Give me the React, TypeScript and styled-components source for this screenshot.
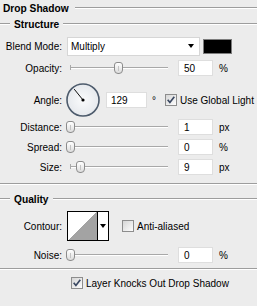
import React from "react";
import styled, { createGlobalStyle } from "styled-components";

const GlobalStyle = createGlobalStyle`
  html, body {
    margin: 0;
    padding: 0;
    background: #ececec;
  }
  body {
    font-family: "Liberation Sans", Arial, sans-serif;
    font-size: 10px;
    color: #000;
  }
`;

const Panel = styled.div`
  width: 257px;
  height: 306px;
  background: #ececec;
  overflow: hidden;
  display: flex;
  flex-direction: column;
`;

const Etched = styled.div<{ $w?: number }>`
  flex: ${({ $w }) => ($w ? `0 0 ${$w}px` : "1")};
  height: 0;
  border-top: 1px solid #9d9d9d;
  border-bottom: 1px solid #ffffff;
`;

const TitleBar = styled.div`
  height: 16px;
  display: flex;
  align-items: center;
  padding-left: 3px;
  gap: 6px;
  font-weight: bold;
  font-size: 10.2px;
`;

const GroupHead = styled.div<{ $mt?: number }>`
  height: 16px;
  margin-top: ${({ $mt }) => $mt ?? 0}px;
  display: flex;
  align-items: center;
  gap: 4px;
  font-weight: bold;
  font-size: 10.2px;
`;

const Separator = styled.div<{ $mt: number }>`
  margin-top: ${({ $mt }) => $mt}px;
  border-top: 1px solid #9d9d9d;
  border-bottom: 1px solid #ffffff;
`;

const Row = styled.div<{ $h: number; $mt?: number; $pl?: number }>`
  height: ${({ $h }) => $h}px;
  margin-top: ${({ $mt }) => $mt ?? 0}px;
  padding-left: ${({ $pl }) => $pl ?? 0}px;
  display: flex;
  align-items: center;
  flex-shrink: 0;
`;

const Label = styled.span`
  width: 62px;
  margin-right: 5px;
  text-align: right;
  flex-shrink: 0;
`;

const Select = styled.div`
  width: 133px;
  height: 19px;
  box-sizing: border-box;
  background: #fff;
  border: 1px solid #d6d6d6;
  display: flex;
  align-items: center;
  justify-content: space-between;
  padding: 0 5px 0 3px;
`;

const Arrow = styled.span`
  width: 0;
  height: 0;
  border-left: 3.5px solid transparent;
  border-right: 3.5px solid transparent;
  border-top: 4px solid #000;
`;

const Swatch = styled.div`
  width: 29px;
  height: 15px;
  margin-left: 3px;
  box-sizing: border-box;
  background: #000;
  border: 1px solid #7d7d7d;
`;

const SliderWrap = styled.div`
  position: relative;
  width: 104px;
  height: 14px;
  flex-shrink: 0;
`;

const Track = styled.div`
  position: absolute;
  left: 3px;
  right: 3px;
  top: 6px;
  border-top: 1px solid #a8a8a8;
  border-bottom: 1px solid #ffffff;
`;

const TrackEnd = styled.div`
  position: absolute;
  left: 3px;
  top: 4px;
  width: 1px;
  height: 5px;
  background: #a8a8a8;
`;

const Thumb = styled.div`
  position: absolute;
  top: 1px;
  width: 9px;
  height: 12px;
  box-sizing: border-box;
  border: 1px solid #8c8c8c;
  border-radius: 3px 3px 4px 4px;
  background: linear-gradient(#ffffff, #dcdcdc);
  &::after {
    content: "";
    position: absolute;
    left: 3px;
    top: 3px;
    width: 1px;
    height: 5px;
    background: #c4c4c4;
  }
`;

const Field = styled.div<{ $w: number; $h: number; $ml: number; $pl?: number }>`
  width: ${({ $w }) => $w}px;
  height: ${({ $h }) => $h}px;
  margin-left: ${({ $ml }) => $ml}px;
  padding-left: ${({ $pl }) => $pl ?? 5}px;
  box-sizing: border-box;
  background: #fff;
  border: 1px solid #dedede;
  display: flex;
  align-items: center;
  flex-shrink: 0;
`;

const Unit = styled.span<{ $ml?: number }>`
  margin-left: ${({ $ml }) => $ml ?? 6}px;
`;

const CheckLabel = styled.span`
  margin-left: 3px;
  white-space: nowrap;
`;

const ContourBox = styled.div`
  width: 42px;
  height: 30px;
  box-sizing: border-box;
  border: 1px solid #000;
  display: flex;
  background: #fff;
`;

const ContourPreview = styled.div`
  width: 29px;
  height: 100%;
  border-right: 1px solid #000;
  background: linear-gradient(to top left, #a3a3a3 50%, #ffffff 50%);
`;

const ContourArrow = styled.div`
  flex: 1;
  display: flex;
  align-items: center;
  justify-content: center;
`;

function Check({ checked, ml }: { checked?: boolean; ml: number }) {
  return (
    <svg width="12" height="12" viewBox="0 0 12 12" style={{ marginLeft: ml, flexShrink: 0 }}>
      <defs>
        <linearGradient id="cbg" x1="0" y1="0" x2="1" y2="1">
          <stop offset="0" stopColor="#d4d4d4" />
          <stop offset="1" stopColor="#ffffff" />
        </linearGradient>
      </defs>
      <rect x="0.5" y="0.5" width="11" height="11" fill="url(#cbg)" stroke="#8d8d8d" />
      {checked && (
        <path d="M2.7 5.8 L4.9 8.5 L9.3 2.8" fill="none" stroke="#3a4862" strokeWidth="1.7" />
      )}
    </svg>
  );
}

function Slider({ frac }: { frac: number }) {
  return (
    <SliderWrap>
      <Track />
      <TrackEnd />
      <Thumb style={{ left: 3 + frac * 98 - 4.5 }} />
    </SliderWrap>
  );
}

function Dial({ angle }: { angle: number }) {
  const r = (angle * Math.PI) / 180;
  const cx = 17;
  const cy = 17;
  const x = cx + Math.cos(r) * 14;
  const y = cy - Math.sin(r) * 14;
  return (
    <svg width="35" height="35" viewBox="0 0 35 35" style={{ marginLeft: -1, flexShrink: 0 }}>
      <defs>
        <radialGradient id="dial" cx="0.5" cy="0.5" r="0.5">
          <stop offset="0" stopColor="#fafbfc" />
          <stop offset="1" stopColor="#e6e9ed" />
        </radialGradient>
      </defs>
      <circle cx={cx} cy={cy} r="16" fill="url(#dial)" stroke="#4d5b6c" strokeWidth="1.6" />
      <line x1={cx} y1={cy} x2={x} y2={y} stroke="#111" strokeWidth="1" />
      <circle cx={cx} cy={cy} r="1.6" fill="#000" />
    </svg>
  );
}

function ValueRow({
  label,
  frac,
  value,
  unit,
  mt,
}: {
  label: string;
  frac: number;
  value: string;
  unit: string;
  mt?: number;
}) {
  return (
    <Row $h={20} $mt={mt}>
      <Label>{label}</Label>
      <Slider frac={frac} />
      <Field $w={35} $h={16} $ml={7}>{value}</Field>
      <Unit>{unit}</Unit>
    </Row>
  );
}

export default function App() {
  return (
    <>
      <GlobalStyle />
      <Panel>
        <TitleBar>
          <span>Drop Shadow</span>
          <Etched />
        </TitleBar>
        <GroupHead>
          <Etched $w={10} />
          <span>Structure</span>
          <Etched />
        </GroupHead>

        <Row $h={20} $mt={4}>
          <Label>Blend Mode:</Label>
          <Select>
            <span>Multiply</span>
            <Arrow />
          </Select>
          <Swatch />
        </Row>
        <ValueRow label="Opacity:" frac={0.49} value="50" unit="%" mt={2} />

        <Row $h={34} $mt={5}>
          <Label>Angle:</Label>
          <Dial angle={129} />
          <Field $w={41} $h={16} $ml={5} $pl={4}>129</Field>
          <Unit $ml={5}>°</Unit>
          <Check checked ml={9} />
          <CheckLabel>Use Global Light</CheckLabel>
        </Row>

        <ValueRow label="Distance:" frac={0.01} value="1" unit="px" />
        <ValueRow label="Spread:" frac={0.01} value="0" unit="%" />
        <ValueRow label="Size:" frac={0.11} value="9" unit="px" />

        <Separator $mt={6} />

        <GroupHead $mt={6}>
          <Etched $w={10} />
          <span>Quality</span>
          <Etched />
        </GroupHead>

        <Row $h={30} $mt={4}>
          <Label>Contour:</Label>
          <ContourBox>
            <ContourPreview />
            <ContourArrow>
              <Arrow />
            </ContourArrow>
          </ContourBox>
          <Check ml={13} />
          <CheckLabel>Anti-aliased</CheckLabel>
        </Row>

        <ValueRow label="Noise:" frac={0.01} value="0" unit="%" mt={4} />

        <Separator $mt={3} />

        <Row $h={20} $mt={3} $pl={71}>
          <Check checked ml={0} />
          <CheckLabel>Layer Knocks Out Drop Shadow</CheckLabel>
        </Row>
      </Panel>
    </>
  );
}
